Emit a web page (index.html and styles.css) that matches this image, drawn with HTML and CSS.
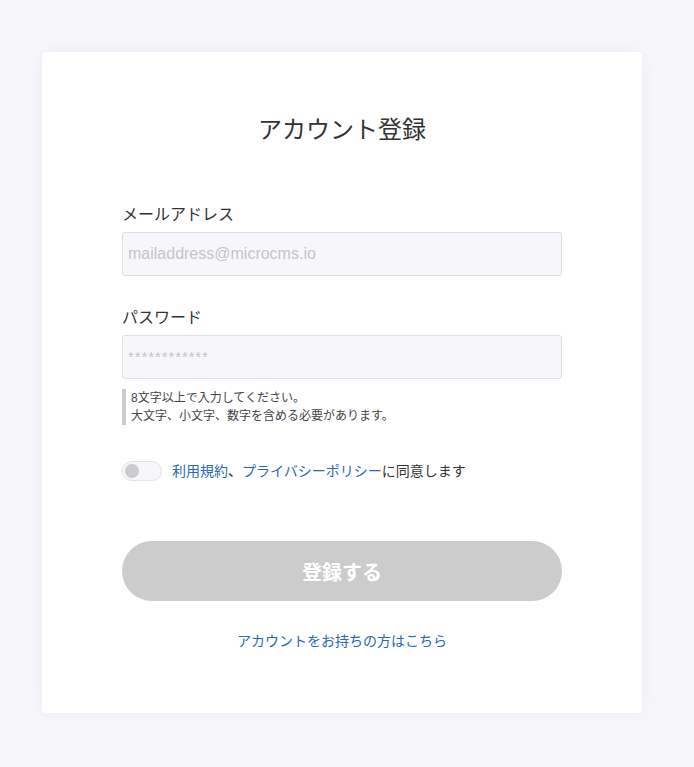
FILE: index.html
```html
<!DOCTYPE html>
<html lang="ja">
<head>
<meta charset="utf-8">
<title>アカウント登録</title>
<link rel="stylesheet" href="styles.css">
</head>
<body>
<main class="page">
  <section class="card">
    <h1 class="title">アカウント登録</h1>
    <form class="form">
      <div class="field">
        <label class="label" for="email">メールアドレス</label>
        <input class="input" id="email" type="email" placeholder="mailaddress@microcms.io">
      </div>
      <div class="field field-pw">
        <label class="label" for="pw">パスワード</label>
        <input class="input input-pw" id="pw" type="text" placeholder="************">
        <p class="help">8文字以上で入力してください。<br>大文字、小文字、数字を含める必要があります。</p>
      </div>
      <div class="agree">
        <span class="toggle"><span class="knob"></span></span>
        <span class="agree-text"><a class="link" href="#">利用規約</a>、<a class="link" href="#">プライバシーポリシー</a>に同意します</span>
      </div>
      <button class="submit" type="button">登録する</button>
      <p class="login"><a class="link" href="#">アカウントをお持ちの方はこちら</a></p>
    </form>
  </section>
</main>
</body>
</html>
```
FILE: styles.css
```css
* { box-sizing: border-box; }
html, body { margin: 0; padding: 0; }
body {
  background: #f7f7fb;
  font-family: "Liberation Sans", "Noto Sans CJK JP", sans-serif;
  color: #333;
  width: 694px;
  height: 767px;
}
.page {
  padding: 52px 52px 54px 42px;
}
.card {
  width: 600px;
  height: 661px;
  background: #fff;
  border-radius: 4px;
  box-shadow: 0 0 20px rgba(180, 180, 210, 0.18);
  padding: 60px 80px 0 80px;
}
.title {
  margin: 0;
  font-size: 24px;
  line-height: 36px;
  font-weight: 400;
  text-align: center;
  color: #333;
}
.form {
  display: flex;
  flex-direction: column;
  margin-top: 55px;
}
.field { display: flex; flex-direction: column; }
.field-pw { margin-top: 30px; }
.label {
  font-size: 16px;
  line-height: 24px;
  margin-bottom: 5px;
  color: #333;
}
.input {
  height: 44px;
  width: 440px;
  border: 1px solid #dedee3;
  border-radius: 3px;
  background: #f7f7fb;
  padding: 0 5px;
  font-family: "Liberation Sans", sans-serif;
  font-size: 16px;
  color: #333;
  outline: none;
}
.input::placeholder { color: #c4c4c8; }
.input-pw::placeholder { font-size: 15px; letter-spacing: 0.9px; }
.help {
  margin: 10px 0 0 0;
  border-left: 4px solid #ccc;
  padding-left: 5px;
  font-size: 12px;
  line-height: 18px;
  color: #444;
}
.agree {
  display: flex;
  align-items: center;
  gap: 10px;
  margin-top: 36px;
  height: 20px;
}
.toggle {
  width: 40px;
  height: 20px;
  border-radius: 10px;
  border: 1px solid #e2e2e6;
  background: #f7f7fb;
  display: flex;
  align-items: center;
  padding-left: 2px;
}
.knob {
  width: 14px;
  height: 14px;
  border-radius: 50%;
  background: #ccc;
}
.agree-text {
  font-size: 14px;
  line-height: 20px;
  color: #333;
}
.link {
  color: #2a66b8;
  text-decoration: none;
}
.submit {
  margin-top: 60px;
  height: 60px;
  width: 440px;
  border: none;
  border-radius: 30px;
  background: #ccc;
  color: #fff;
  font-family: "Liberation Sans", "Noto Sans CJK JP", sans-serif;
  font-size: 20px;
  font-weight: 700;
}
.login {
  margin: 30px 0 0 0;
  text-align: center;
  font-size: 14px;
  line-height: 20px;
}
```
